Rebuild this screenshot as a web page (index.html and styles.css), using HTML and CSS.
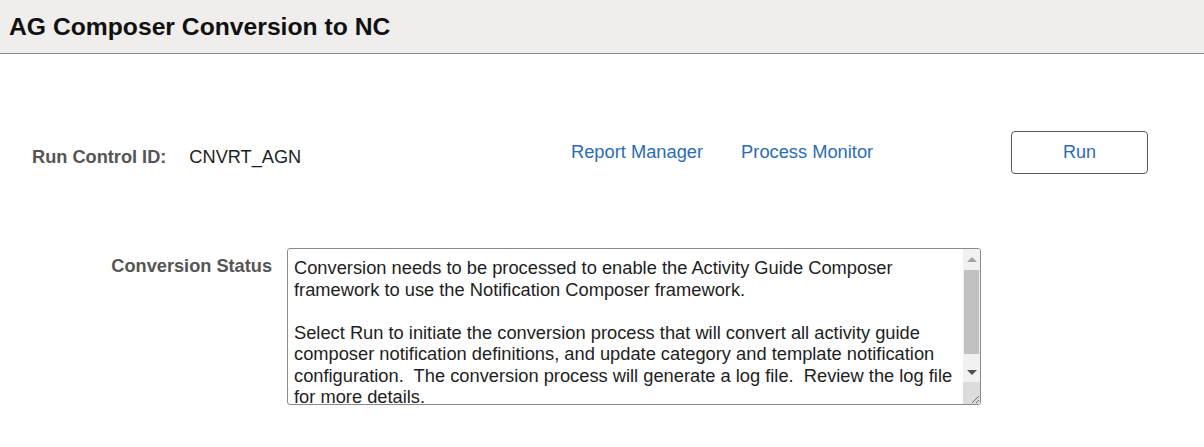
FILE: index.html
```html
<!DOCTYPE html>
<html lang="en">
<head>
  <meta charset="UTF-8" />
  <title>AG Composer Conversion to NC</title>
  <link rel="stylesheet" href="styles.css">
</head>
<body>
  <div class="page-header">
    <h1>AG Composer Conversion to NC</h1>
  </div>

  <div class="content">
    <!-- Run control row -->
    <div class="run-row">
      <div class="run-control">
        <span class="label">Run Control ID:</span>
        <span class="value">CNVRT_AGN</span>
      </div>
      <div class="links">
        <a href="#">Report Manager</a>
        <a href="#">Process Monitor</a>
      </div>
      <button type="button" class="run-btn">Run</button>
    </div>

    <!-- Status row -->
    <div class="status-row">
      <div class="status-label">Conversion Status</div>
      <div class="status-box">
        <div class="status-text">Conversion needs to be processed to enable the Activity Guide Composer framework to use the Notification Composer framework.

Select Run to initiate the conversion process that will convert all activity guide composer notification definitions, and update category and template notification configuration.  The conversion process will generate a log file.  Review the log file for more details.</div>
        <div class="scrollbar">
          <div class="sb-btn"><span class="arrow-up"></span></div>
          <div class="sb-track"><div class="sb-thumb"></div></div>
          <div class="sb-btn"><span class="arrow-down"></span></div>
          <div class="sb-corner">
            <svg width="10" height="10" viewBox="0 0 10 10">
              <line x1="2" y1="9" x2="9" y2="2" stroke="#6b6b6b" stroke-width="1"/>
              <line x1="6" y1="9" x2="9" y2="6" stroke="#6b6b6b" stroke-width="1"/>
            </svg>
          </div>
        </div>
      </div>
    </div>
  </div>
</body>
</html>
```

FILE: styles.css
```css
:root {
  --header-bg: #efeeec;
  --header-line: #8c8a87;
  --label-color: #555555;
  --text-color: #1e1e1e;
  --link-color: #2a6db5;
}

body {
  margin: 0;
  font-family: 'Liberation Sans', Arial, sans-serif;
  background-color: white;
  color: var(--text-color);
}

.page-header {
  background-color: var(--header-bg);
  border-bottom: 1px solid var(--header-line);
  height: 53px;
  display: flex;
  align-items: center;
  padding-left: 9px;
}

.page-header h1 {
  margin: 0;
  font-size: 24.7px;
  font-weight: bold;
  color: #111;
}

.content {
  padding-top: 77px;
}

.run-row {
  display: flex;
  align-items: flex-start;
  height: 43px;
}

.run-control {
  display: flex;
  gap: 23px;
  padding-left: 32px;
  padding-top: 16px;
  font-size: 18.2px;
  width: 539px;
}

.label {
  font-weight: bold;
  color: var(--label-color);
}

.value {
  color: var(--text-color);
}

.links {
  display: flex;
  gap: 38px;
  padding-top: 10px;
  width: 440px;
}

.links a {
  color: var(--link-color);
  text-decoration: none;
  font-size: 18.3px;
}

.run-btn {
  width: 137px;
  height: 43px;
  background: white;
  border: 1px solid #5a5a5a;
  border-radius: 4px;
  color: var(--link-color);
  font-family: inherit;
  font-size: 18px;
  cursor: pointer;
}

.status-row {
  display: flex;
  align-items: flex-start;
  margin-top: 74px;
}

.status-label {
  width: 272px;
  text-align: right;
  padding-top: 8px;
  font-size: 18.2px;
  font-weight: bold;
  color: var(--label-color);
}

.status-box {
  margin-left: 15px;
  width: 694px;
  height: 157px;
  box-sizing: border-box;
  display: flex;
  border: 1px solid #8a8a8a;
  border-radius: 3px;
  overflow: hidden;
}

.status-text {
  flex: 1;
  padding: 8px 4px 0 6px;
  font-size: 18.3px;
  line-height: 21.5px;
  color: var(--text-color);
  white-space: pre-wrap;
  overflow: hidden;
}

.scrollbar {
  width: 17px;
  display: flex;
  flex-direction: column;
  background-color: #f1f1f1;
}

.sb-btn {
  height: 20px;
  display: flex;
  align-items: center;
  justify-content: center;
}

.arrow-up {
  border-left: 5px solid transparent;
  border-right: 5px solid transparent;
  border-bottom: 5px solid #a3a3a3;
}

.arrow-down {
  border-left: 5px solid transparent;
  border-right: 5px solid transparent;
  border-top: 5px solid #505050;
}

.sb-track {
  flex: 1;
  padding: 1px 1px 0;
}

.sb-thumb {
  height: 84px;
  background-color: #c1c1c1;
}

.sb-corner {
  height: 22px;
  background-color: #dcdcdc;
  display: flex;
  align-items: flex-end;
  justify-content: flex-end;
}
```
